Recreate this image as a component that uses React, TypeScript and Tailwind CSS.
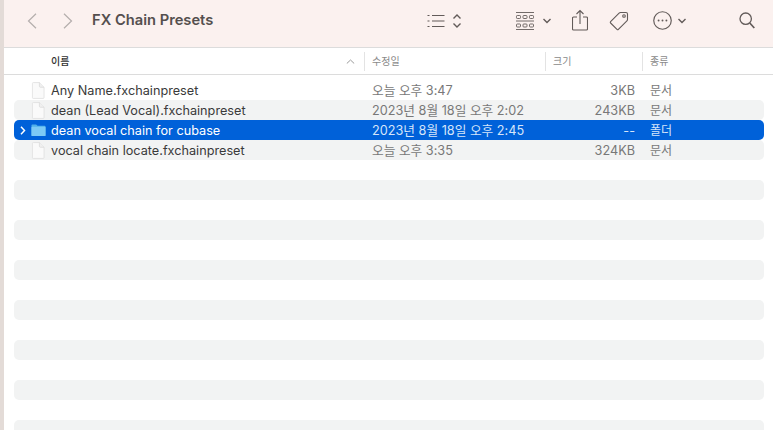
import React from 'react';

const font = { fontFamily: '"Inter", "Noto Sans CJK KR", sans-serif' };

const files = [
  { name: 'Any Name.fxchainpreset', date: '오늘 오후 3:47', size: '3KB', kind: '문서' },
  { name: 'dean (Lead Vocal).fxchainpreset', date: '2023년 8월 18일 오후 2:02', size: '243KB', kind: '문서' },
  { name: 'dean vocal chain for cubase', date: '2023년 8월 18일 오후 2:45', size: '--', kind: '폴더', folder: true },
  { name: 'vocal chain locate.fxchainpreset', date: '오늘 오후 3:35', size: '324KB', kind: '문서' },
];

function FileIcon() {
  return (
    <svg width="14" height="17" viewBox="0 0 15 18" fill="none">
      <path d="M1.500 1.500a1 1 0 0 1 1-1h6.500l5 5v11a1 1 0 0 1-1 1h-10.500a1 1 0 0 1-1-1z" fill="#fafafa" stroke="#dedede" strokeWidth="0.800" />
      <path d="M9 .5v4a1 1 0 0 0 1 1h4" fill="#f0f0f0" stroke="#d8d8d8" strokeWidth="0.800" />
    </svg>
  );
}

function FolderIcon() {
  return (
    <svg width="15" height="14" viewBox="0 0 16 14">
      <path d="M.5 2a1 1 0 0 1 1-1h4l1.500 1.500h7.500a1 1 0 0 1 1 1v9a1 1 0 0 1-1 1h-13a1 1 0 0 1-1-1z" fill="#4fb0ea" />
      <path d="M.5 4a.6.6 0 0 1 .6-.6h13.800a.6.600 0 0 1 .6.600v8.500a1 1 0 0 1-1 1h-13a1 1 0 0 1-1-1z" fill="#7cc9f5" />
    </svg>
  );
}

function Toolbar() {
  const stroke = '#625b59';
  return (
    <div className="flex h-[47px] items-center bg-[#fbf1ef] pb-[6px] pl-[23px]">
      <svg width="10" height="16" viewBox="0 0 10 16" fill="none" className="mr-[26px]">
        <path d="M9 .8 1.500 8 9 15.200" stroke="#b4aeac" strokeWidth="1.200" />
      </svg>
      <svg width="10" height="16" viewBox="0 0 10 16" fill="none" className="mr-[19px]">
        <path d="M1 .8 8.500 8 1 15.200" stroke="#b4aeac" strokeWidth="1.200" />
      </svg>
      <span className="w-[335px] text-[14.700px] font-semibold text-[#544f4e]">FX Chain Presets</span>

      <svg width="18" height="14" viewBox="0 0 18 14" fill="none" stroke={stroke} strokeWidth="1.100">
        <path d="M5 1.500h12.500M5 7h12.500M5 12.500h12.500M.5 1.500h2M.5 7h2M.5 12.500h2" />
      </svg>
      <svg width="10" height="16" viewBox="0 0 10 16" fill="none" stroke={stroke} strokeWidth="1.400" className="ml-[7px]">
        <path d="M1.500 5.500 5 2l3.500 3.500M1.500 10.500 5 14l3.500-3.500" />
      </svg>

      <svg width="20" height="20" viewBox="0 0 20 20" fill="none" stroke={stroke} className="ml-[53px]" strokeWidth="0.900">
        <path d="M1 1.500h18M1 10h18M1 18.500h18" />
        <rect x="1.500" y="4.500" width="4" height="3" rx="0.800" />
        <rect x="8" y="4.500" width="4" height="3" rx="0.800" />
        <rect x="14.500" y="4.500" width="4" height="3" rx="0.800" />
        <rect x="1.500" y="13" width="4" height="3" rx="0.800" />
        <rect x="8" y="13" width="4" height="3" rx="0.800" />
        <rect x="14.500" y="13" width="4" height="3" rx="0.800" />
      </svg>
      <svg width="10" height="6" viewBox="0 0 10 6" fill="none" stroke={stroke} strokeWidth="1.400" className="ml-[7px]">
        <path d="M1.500 1 5 4.500 8.500 1" />
      </svg>

      <svg width="16" height="22" viewBox="0 0 16 22" fill="none" stroke={stroke} strokeWidth="1.100" className="mb-[2px] ml-[20px]">
        <path d="M5 8H1.500a1 1 0 0 0-1 1v11a1 1 0 0 0 1 1h13a1 1 0 0 0 1-1V9a1 1 0 0 0-1-1H11" />
        <path d="M8 15V1.500M4.500 5 8 1.500 11.500 5" />
      </svg>

      <svg width="20" height="20" viewBox="0 0 20 20" fill="none" stroke={stroke} strokeWidth="1.100" className="ml-[21px]">
        <path d="M11.500 1.500h5.500a1.500 1.500 0 0 1 1.500 1.500v5.500a2 2 0 0 1-.6 1.400l-8.500 8.500a1 1 0 0 1-1.400 0l-6.400-6.400a1 1 0 0 1 0-1.400l8.500-8.500a2 2 0 0 1 1.400-.6z" />
        <circle cx="15" cy="5" r="1.300" />
      </svg>

      <svg width="19" height="19" viewBox="0 0 18 18" fill="none" stroke={stroke} strokeWidth="1.100" className="ml-[24px]">
        <circle cx="9" cy="9" r="8.300" />
        <circle cx="5.300" cy="9" r="0.900" fill={stroke} stroke="none" />
        <circle cx="9" cy="9" r="0.900" fill={stroke} stroke="none" />
        <circle cx="12.700" cy="9" r="0.900" fill={stroke} stroke="none" />
      </svg>
      <svg width="10" height="6" viewBox="0 0 10 6" fill="none" stroke={stroke} strokeWidth="1.400" className="ml-[5px]">
        <path d="M1.500 1 5 4.500 8.500 1" />
      </svg>

      <svg width="16" height="17" viewBox="0 0 16 17" fill="none" stroke={stroke} strokeWidth="1.300" className="ml-[52px]">
        <circle cx="6.700" cy="6.700" r="5.700" />
        <path d="m10.800 11 4.500 5" strokeWidth="1.700" />
      </svg>
    </div>
  );
}

function Header() {
  return (
    <div className="flex h-[28px] items-center border-y border-[#dcdcdc] bg-white pl-[47px] text-[10px] text-[#8a8a8a]">
      <div className="flex h-[19px] w-[314px] items-center justify-between border-r border-[#e3e3e3] pr-[9px]">
        <span className="font-medium text-[#333333]">이름</span>
        <svg width="9" height="5" viewBox="0 0 9 5" fill="none" stroke="#9a9a9a" strokeWidth="1">
          <path d="M.8 4.500 4.500 1l3.700 3.500" />
        </svg>
      </div>
      <div className="flex h-[19px] w-[181px] items-center border-r border-[#e3e3e3] pl-[7px]">수정일</div>
      <div className="flex h-[19px] w-[97px] items-center border-r border-[#e3e3e3] pl-[7px]">크기</div>
      <div className="pl-[7px]">종류</div>
    </div>
  );
}

function FileRow({ file, index }: { file: (typeof files)[number]; index: number }) {
  const selected = !!file.folder;
  const bg = selected ? 'bg-[#0061d9]' : index % 2 === 1 ? 'bg-[#f2f3f3]' : '';
  const muted = selected ? 'text-[#d5e5fa]' : 'text-[#787878]';
  return (
    <div className={`flex h-[20px] items-center rounded-[5px] text-[12.700px] ${bg}`}>
      <div className="flex w-[350px] items-center">
        <div className="flex w-[16px] justify-center">
          {selected && (
            <svg width="6" height="9" viewBox="0 0 6 9" fill="none" stroke="#ffffff" strokeWidth="1.500" className="ml-[1px]">
              <path d="m1 .8 3.500 3.700L1 8.200" />
            </svg>
          )}
        </div>
        <div className="flex w-[16px] justify-center">{selected ? <FolderIcon /> : <FileIcon />}</div>
        <div className={`pl-[5px] pt-[2px] ${selected ? 'text-white' : 'text-[#3a3a3a]'}`}>{file.name}</div>
      </div>
      <div className={`w-[181px] pl-[8px] pt-[2px] ${muted}`}>{file.date}</div>
      <div className={`w-[90px] pt-[2px] text-right ${muted}`}>{file.size}</div>
      <div className={`pl-[15px] pt-[2px] text-[12px] ${muted}`}>{file.kind}</div>
    </div>
  );
}

export default function App() {
  return (
    <div className="flex h-[430px] w-[773px] overflow-hidden bg-white" style={font}>
      <div className="w-[4px] shrink-0 bg-[#e3dbd7]" />
      <div className="flex-1">
        <Toolbar />
        <Header />
        <div className="ml-[10px] mr-[9px] mt-[5px]">
          {files.map((file, i) => (
            <FileRow key={file.name} file={file} index={i} />
          ))}
          {[4, 5, 6, 7, 8, 9, 10, 11, 12, 13, 14, 15, 16, 17].map((i) => (
            <div key={i} className={`h-[20px] rounded-[5px] ${i % 2 === 1 ? 'bg-[#f2f3f3]' : ''}`} />
          ))}
        </div>
      </div>
    </div>
  );
}
